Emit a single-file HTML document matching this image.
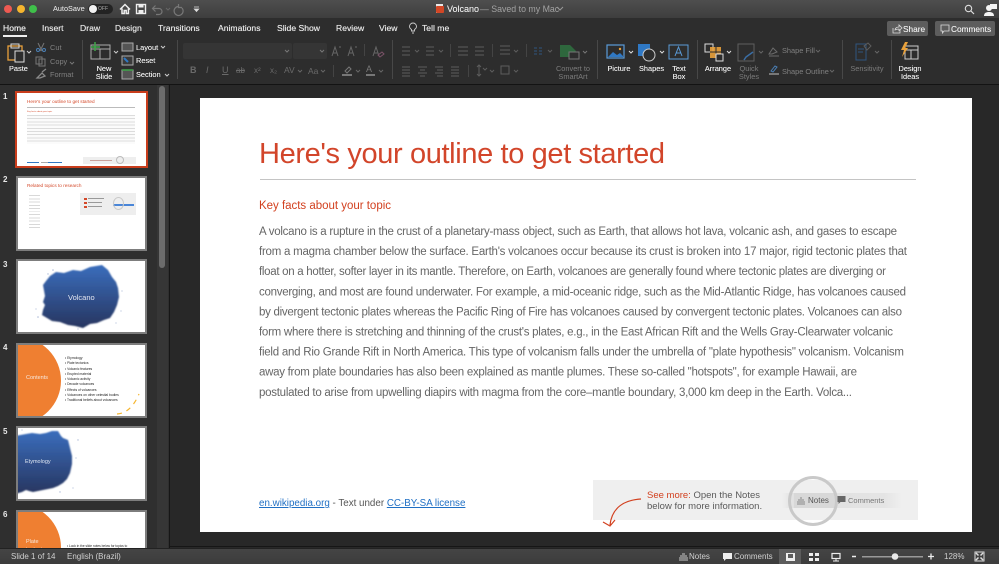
<!DOCTYPE html>
<html><head><meta charset="utf-8"><style>
html,body{margin:0;padding:0;width:999px;height:564px;overflow:hidden;background:#282828;font-family:"Liberation Sans",sans-serif}
#root{position:relative;width:999px;height:564px;overflow:hidden}
.a{position:absolute}
.t{position:absolute;white-space:nowrap;line-height:1}
.tab{top:24px;font-size:8.6px;color:#e8e8e8;text-shadow:0 0 .4px #e8e8e8}
.w{color:#ececec;font-size:7.4px;text-align:center;line-height:8px;white-space:nowrap;position:absolute;text-shadow:0 0 .3px #ececec}
.g{color:#7c7c7c;font-size:7.4px;text-align:center;line-height:8px;white-space:nowrap;position:absolute}
.num{font-size:8px;font-weight:bold;color:#e8e8e8;left:3px;position:absolute;line-height:1}
.th{position:absolute;left:16px;width:131px;height:75px;box-sizing:border-box;background:#fff;border:2px solid #7d7d7d;overflow:hidden}
.sv{position:absolute;overflow:visible}
</style></head><body><div id="root">
<!-- title bar -->
<div class="a" style="left:0;top:0;width:999px;height:18px;background:linear-gradient(#4e4e4e,#3e3e3e)"></div>
<div class="a" style="left:238px;top:18px;width:761px;height:1px;background:#111"></div>
<div class="a" style="left:4px;top:5px;width:8px;height:8px;border-radius:50%;background:#ee5a52"></div>
<div class="a" style="left:17px;top:5px;width:8px;height:8px;border-radius:50%;background:#f5b52e"></div>
<div class="a" style="left:29px;top:5px;width:8px;height:8px;border-radius:50%;background:#3fc04a"></div>
<div class="t" style="left:53px;top:5px;font-size:7.300px;color:#d8d8d8;text-shadow:0 0 .3px #d8d8d8">AutoSave</div>
<div class="a" style="left:88px;top:4px;width:25px;height:10px;border-radius:5px;background:#232323"></div>
<div class="a" style="left:89px;top:5px;width:8px;height:8px;border-radius:50%;background:#f2f2f2"></div>
<div class="t" style="left:98px;top:7px;font-size:5px;color:#aaa">OFF</div>
<svg class="sv" style="left:0;top:0" width="220" height="18" viewBox="0 0 220 18">
<path d="M120 9.500l5-5 5 5M122 8.500v5h2.200v-3h2v3h2.200v-5" fill="none" stroke="#eee" stroke-width="1.500"/>
<rect x="136.500" y="4.500" width="9" height="9" fill="none" stroke="#eee" stroke-width="1.400"/><rect x="138.500" y="4.500" width="5" height="3" fill="#eee"/><rect x="138.500" y="10" width="5" height="3.500" fill="#eee"/>
<path d="M153 8.500h6a3 3 0 0 1 0 6h-3M155.500 5.500l-3 3 3 3" fill="none" stroke="#777" stroke-width="1.200"/>
<path d="M166 8l2 2 2-2" fill="none" stroke="#666" stroke-width="1"/>
<path d="M178 6.500a4.500 4.500 0 1 0 4 1.500M178.500 4v3.500h3.500" fill="none" stroke="#777" stroke-width="1.200"/>
<path d="M194 7h5M194.300 9h4.400l-2.200 2.500z" fill="#ddd" stroke="#ddd" stroke-width=".8"/>
</svg>
<div class="a" style="left:436px;top:4px;width:7px;height:9px;background:#e8e8e8"></div>
<div class="a" style="left:436px;top:6px;width:8px;height:7px;background:#d24726;border-radius:1px"></div>
<div class="t" style="left:447px;top:4.500px;font-size:9px;color:#e6e6e6;text-shadow:0 0 .3px #e6e6e6">Volcano</div>
<div class="t" style="left:480px;top:4.500px;font-size:8.800px;color:#a2a2a2">— Saved to my Mac</div>
<svg class="sv" style="left:556px;top:6px" width="8" height="6"><path d="M1 1l3 3 3-3" fill="none" stroke="#999"/></svg>
<svg class="sv" style="left:960px;top:2px" width="39" height="16" viewBox="0 0 39 16"><circle cx="8.500" cy="6.500" r="3.200" fill="none" stroke="#ddd" stroke-width="1.100"/><path d="M11 9l3 3" stroke="#ddd" stroke-width="1.200"/><circle cx="29" cy="6" r="3" fill="#f4f4f4"/><path d="M24 14c0-3 2-4 5-4s5 1 5 4z" fill="#f4f4f4"/><rect x="30" y="2" width="7" height="5" fill="#f4f4f4"/></svg>
<!-- ribbon -->
<div class="a" style="left:0;top:18px;width:999px;height:66px;background:#2d2d2d"></div>
<div class="a" style="left:0;top:84px;width:999px;height:1px;background:#131313"></div>
<div class="t tab" style="left:3px;color:#f4f4f4">Home</div>
<div class="a" style="left:3px;top:35px;width:24px;height:1.500px;background:#eee"></div>
<div class="t tab" style="left:42px">Insert</div>
<div class="t tab" style="left:80px">Draw</div>
<div class="t tab" style="left:115px">Design</div>
<div class="t tab" style="left:158px">Transitions</div>
<div class="t tab" style="left:218px">Animations</div>
<div class="t tab" style="left:277px">Slide Show</div>
<div class="t tab" style="left:336px">Review</div>
<div class="t tab" style="left:379px">View</div>
<div class="t tab" style="left:422px">Tell me</div>
<svg class="sv" style="left:408px;top:22px" width="10" height="13"><path d="M3.500 9V7.500C2 6.500 1.500 5.500 1.500 4.500a3.500 3.500 0 0 1 7 0c0 1-.5 2-2 3V9zM4 11h2" fill="none" stroke="#ccc" stroke-width=".9"/></svg>
<!-- share/comments -->
<div class="a" style="left:887px;top:21px;width:41px;height:15px;background:#5d5d5d;border-radius:2px"></div>
<div class="t" style="left:903px;top:24.500px;font-size:8.300px;color:#eee;text-shadow:0 0 .3px #eee">Share</div>
<svg class="sv" style="left:892px;top:24px" width="10" height="10"><path d="M1 4v5h7V6M3 6c0-2 2-3 4-3V1l3 3-3 2.500V5c-2 0-3 .5-4 1z" fill="none" stroke="#ddd" stroke-width=".8"/></svg>
<div class="a" style="left:935px;top:21px;width:60px;height:15px;background:#5d5d5d;border-radius:2px"></div>
<div class="t" style="left:951px;top:24.500px;font-size:8.300px;color:#eee;text-shadow:0 0 .3px #eee">Comments</div>
<svg class="sv" style="left:940px;top:24px" width="10" height="10"><path d="M1 1h8v6H4L2.500 9V7H1z" fill="none" stroke="#ddd" stroke-width=".8"/></svg>
<!-- ribbon separators -->
<div class="a" style="left:82px;top:40px;width:1px;height:39px;background:#484848"></div>
<div class="a" style="left:177px;top:40px;width:1px;height:39px;background:#484848"></div>
<div class="a" style="left:392px;top:40px;width:1px;height:39px;background:#484848"></div>
<div class="a" style="left:597px;top:40px;width:1px;height:39px;background:#484848"></div>
<div class="a" style="left:697px;top:40px;width:1px;height:39px;background:#484848"></div>
<div class="a" style="left:842px;top:40px;width:1px;height:39px;background:#484848"></div>
<div class="a" style="left:891px;top:40px;width:1px;height:39px;background:#484848"></div>
<!-- font combo -->
<div class="a" style="left:183px;top:43px;width:109px;height:16px;background:#353535;border-radius:2px"></div>
<div class="a" style="left:293px;top:43px;width:34px;height:16px;background:#353535;border-radius:2px"></div>
<svg class="sv" style="left:0;top:36px" width="999" height="48" viewBox="0 36 999 48" fill="none">
<!-- paste -->
<rect x="8" y="46" width="14" height="14" stroke="#e9a13b" stroke-width="1.300"/><rect x="11" y="44" width="8" height="4" stroke="#ddd"/><rect x="15" y="51" width="9" height="11" fill="#2d2d2d" stroke="#ddd"/>
<path d="M27 51l2 2 2-2" stroke="#ccc"/>
<path d="M38 43l4 8M44 43l-4 8" stroke="#777"/><circle cx="38" cy="50" r="1.500" stroke="#4a7fb5"/><circle cx="44" cy="50" r="1.500" stroke="#4a7fb5"/>
<rect x="36" y="57" width="6" height="7" stroke="#777"/><rect x="39" y="59" width="6" height="7" stroke="#777"/>
<path d="M37 78l5-5 3 3-5 2zM42 72l4-3" stroke="#8a8a8a" stroke-width="1.300"/>
<path d="M70 62l2 2 2-2" stroke="#777"/>
<!-- new slide -->
<rect x="91" y="45" width="19" height="14" stroke="#aaa"/><path d="M91 49h19M100 49v10" stroke="#aaa"/><path d="M95 42v9M91 47h9" stroke="#3fa64a" stroke-width="1.500"/>
<path d="M114 51l2 2 2-2" stroke="#ccc"/>
<rect x="122" y="43" width="11" height="8" stroke="#aaa" fill="#555"/>
<rect x="122" y="56" width="11" height="9" stroke="#aaa" fill="#3a3a3a"/><path d="M124 58l4 4" stroke="#2f78c4" stroke-width="2"/>
<rect x="122" y="70" width="11" height="9" stroke="#aaa" fill="#555"/><path d="M122 70h11" stroke="#3fa64a" stroke-width="1.500"/>
<path d="M161 46l2 2 2-2M165 74l2 2 2-2" stroke="#ccc"/>
<!-- font -->
<path d="M285 50l2 2 2-2M320 50l2 2 2-2" stroke="#777"/>
<path d="M332 56l3-9 3 9M333 53h4M339 47h2" stroke="#666"/><path d="M348 56l3-9 3 9M349 53h4M355 47h2" stroke="#666"/>
<path d="M364.500 44v12" stroke="#444"/><path d="M373 56l3-9 3 9M374 53h4" stroke="#666"/><path d="M378 55l4-3 2 2-4 3z" stroke="#7a5268"/>
<!-- lower font row -->
<path d="M298 70l2 2 2-2M321 70l2 2 2-2M356 70l2 2 2-2M379 70l2 2 2-2" stroke="#666"/>
<path d="M333.500 65v12" stroke="#444"/>
<path d="M342 75h10" stroke="#777" stroke-width="2"/><path d="M345 71l4-4 2 2-4 4z" stroke="#777"/>
<path d="M366 75h9" stroke="#777" stroke-width="2"/>
<!-- bullets -->
<path d="M402 47h8M402 51h8M402 55h8M415 50l2 2 2-2M426 47h8M426 51h8M426 55h8M439 50l2 2 2-2M458 47h10M458 51h10M458 55h10M475 47h9M475 51h9M475 55h9" stroke="#5d5d5d"/>
<path d="M450.500 44v13M492.500 44v13" stroke="#444"/>
<path d="M402 67h8M402 70h8M402 73h8M402 76h8M418 67h9M420 70h5M418 73h9M420 76h5M435 67h8M437 70h6M435 73h8M437 76h6M451 67h8M451 70h8M451 73h8M451 76h8" stroke="#5d5d5d"/>
<path d="M468.500 65v12" stroke="#444"/>
<path d="M479 65v11M477 67l2-2 2 2M477 74l2 2 2-2M483 68l2 2 2-2M490 70l2 2 2-2" stroke="#5d5d5d"/>
<path d="M500 46h10M500 50h10M500 54h10M514 50l2 2 2-2M501 66h8v8h-8zM514 70l2 2 2-2" stroke="#5d5d5d"/>
<path d="M526.500 44v13" stroke="#444"/>
<path d="M534 48h3M534 51h3M534 54h3M539 48h3M539 51h3M539 54h3" stroke="#30557f"/>
<path d="M548 50l2 2 2-2" stroke="#5d5d5d"/>
<path d="M560 45h10l6 6-6 6h-10z" fill="#2f6e3f" opacity=".9"/><rect x="569" y="52" width="10" height="7" fill="#2d2d2d" stroke="#777"/>
<path d="M583 51l2 2 2-2" stroke="#777"/>
<!-- picture etc -->
<rect x="607" y="45" width="17" height="13" stroke="#5a9bd8" stroke-width="1.200"/><path d="M608 57l5-5 4 3 3-2 3 3v1z" fill="#2f78c4"/><circle cx="620" cy="49" r="1.200" fill="#e9a13b"/>
<path d="M629 51l2 2 2-2" stroke="#ddd"/>
<rect x="638" y="44" width="12" height="12" fill="#2f78c4"/><circle cx="649" cy="55" r="6" fill="#2d2d2d" stroke="#ccc"/>
<path d="M660 51l2 2 2-2" stroke="#ddd"/>
<rect x="669" y="45" width="19" height="14" stroke="#5a9bd8"/><path d="M675 56l3.500-9 3.500 9M676 53h5" stroke="#5a9bd8"/>
<!-- arrange -->
<rect x="705" y="44" width="8" height="8" stroke="#ddd"/><rect x="710" y="47" width="11" height="11" fill="#e9a13b" opacity=".9"/><path d="M716 47v11M710 52h11" stroke="#2d2d2d"/><rect x="716" y="54" width="7" height="7" fill="#2d2d2d" stroke="#ddd"/>
<path d="M727 51l2 2 2-2" stroke="#ddd"/>
<rect x="738" y="44" width="16" height="17" stroke="#5e5e5e"/><path d="M744 60l2-3 7-5" stroke="#3a6ea5" stroke-width="1.500"/>
<path d="M759 51l2 2 2-2" stroke="#666"/>
<path d="M769 54l4-6 4 4-5 2zM769 56h10" stroke="#6c6c6c"/>
<path d="M769 74h10" stroke="#777" stroke-width="2"/><path d="M771 71l4-5 2 1-4 5z" stroke="#4a7fb5"/>
<path d="M816 50l2 2 2-2M830 70l2 2 2-2" stroke="#666"/>
<!-- sensitivity -->
<path d="M856 44h10v16h-10z" stroke="#30557f"/><path d="M858 49l6 0M858 52l5 0" stroke="#30557f"/><path d="M864 46l4-3 3 3-4 4z" stroke="#5d5d5d"/>
<path d="M875 51l2 2 2-2" stroke="#666"/>
<!-- design ideas -->
<rect x="905" y="46" width="13" height="13" stroke="#ccc"/><path d="M905 50h13M911 50v9" stroke="#ccc"/><path d="M905 42l-4 8h3l-2 7 6-9h-3l3-6z" fill="#e9a13b"/>
</svg>
<div class="t" style="left:9px;top:65px;font-size:7.400px;color:#ececec;text-shadow:0 0 .3px #ececec">Paste</div>
<div class="t" style="left:50px;top:44px;font-size:7.400px;color:#808080">Cut</div>
<div class="t" style="left:50px;top:58px;font-size:7.400px;color:#808080">Copy</div>
<div class="t" style="left:50px;top:71px;font-size:7.400px;color:#808080">Format</div>
<div class="w" style="left:93px;top:65px;width:22px">New<br>Slide</div>
<div class="t" style="left:136px;top:44px;font-size:7.400px;color:#ececec;text-shadow:0 0 .3px #ececec">Layout</div>
<div class="t" style="left:136px;top:57px;font-size:7.400px;color:#ececec;text-shadow:0 0 .3px #ececec">Reset</div>
<div class="t" style="left:136px;top:71px;font-size:7.400px;color:#ececec;text-shadow:0 0 .3px #ececec">Section</div>
<div class="t" style="left:190px;top:66px;font-size:9px;color:#6a6a6a;font-weight:bold">B</div>
<div class="t" style="left:206px;top:66px;font-size:9px;color:#6a6a6a;font-style:italic">I</div>
<div class="t" style="left:222px;top:66px;font-size:9px;color:#6a6a6a;text-decoration:underline">U</div>
<div class="t" style="left:236px;top:67px;font-size:8px;color:#6a6a6a;text-decoration:line-through">ab</div>
<div class="t" style="left:254px;top:67px;font-size:8px;color:#6a6a6a">x²</div>
<div class="t" style="left:270px;top:67px;font-size:8px;color:#6a6a6a">x₂</div>
<div class="t" style="left:284px;top:66px;font-size:8.500px;color:#6a6a6a">AV</div>
<div class="t" style="left:308px;top:67px;font-size:8.500px;color:#6a6a6a">Aa</div>
<div class="t" style="left:366px;top:65px;font-size:9px;color:#777">A</div>
<div class="g" style="left:555px;top:65px;width:36px">Convert to<br>SmartArt</div>
<div class="w" style="left:607px;top:65px;width:24px">Picture</div>
<div class="w" style="left:639px;top:65px;width:24px">Shapes</div>
<div class="w" style="left:668px;top:65px;width:22px">Text<br>Box</div>
<div class="w" style="left:704px;top:65px;width:28px">Arrange</div>
<div class="g" style="left:737px;top:65px;width:24px">Quick<br>Styles</div>
<div class="t" style="left:782px;top:47px;font-size:7.400px;color:#808080">Shape Fill</div>
<div class="t" style="left:782px;top:68px;font-size:7.400px;color:#808080">Shape Outline</div>
<div class="g" style="left:849px;top:65px;width:36px">Sensitivity</div>
<div class="w" style="left:898px;top:65px;width:24px">Design<br>Ideas</div>
<!-- panels -->
<div class="a" style="left:0;top:85px;width:169px;height:463px;background:#2f2f2f"></div>
<div class="a" style="left:169px;top:85px;width:1px;height:463px;background:#161616"></div>
<div class="a" style="left:170px;top:85px;width:829px;height:463px;background:#282828"></div>
<div class="a" style="left:157px;top:85px;width:11px;height:463px;background:#363636"></div>
<div class="a" style="left:159px;top:86px;width:6px;height:182px;background:#6c6c6c;border-radius:3px"></div>
<div class="a" style="left:170px;top:546px;width:829px;height:1px;background:#161616"></div>
<!-- thumbnails -->
<div class="num" style="top:93px">1</div>
<div class="a" style="left:15px;top:91px;width:133px;height:77px;box-sizing:border-box;border:2px solid #c93d1c;background:#fff;overflow:hidden">
 <div class="t" style="left:10px;top:6.500px;font-size:4.700px;color:#d4492a">Here's your outline to get started</div>
 <div class="a" style="left:10px;top:14px;width:108px;height:1px;background:#bbb"></div>
 <div class="t" style="left:10px;top:17.500px;font-size:2.200px;color:#d4492a">Key facts about your topic</div>
 <div class="a" style="left:10px;top:22px;width:108px;height:29px;background:repeating-linear-gradient(#dcdcdc 0 1px,#fbfbfb 1px 3.200px)"></div>
 <div class="a" style="left:10px;top:69px;width:12px;height:1px;background:#2f78c4"></div><div class="a" style="left:31px;top:69px;width:14px;height:1px;background:#2f78c4"></div><div class="a" style="left:24px;top:69px;width:7px;height:1px;background:#aaa"></div>
 <div class="a" style="left:66px;top:64px;width:53px;height:7px;background:#eee"></div>
 <div class="a" style="left:99px;top:63px;width:8px;height:8px;border:1px solid #bbb;border-radius:50%;box-sizing:border-box"></div>
 <div class="a" style="left:73px;top:67px;width:22px;height:1px;background:#c8a09a"></div>
</div>
<div class="num" style="top:176px">2</div>
<div class="th" style="top:176px">
 <div class="t" style="left:9px;top:6px;font-size:4.700px;color:#d4492a">Related topics to research</div>
 <div class="a" style="left:11px;top:17px;width:11px;height:17px;background:repeating-linear-gradient(#d8d8d8 0 1px,#fff 1px 3.300px)"></div>
 <div class="a" style="left:11px;top:36px;width:11px;height:14px;background:repeating-linear-gradient(#d8d8d8 0 1px,#fff 1px 3.300px)"></div>
 <div class="a" style="left:62px;top:15px;width:56px;height:22px;background:#eeeeee"></div>
 <div class="a" style="left:66px;top:20px;width:3px;height:2px;background:#d4492a"></div><div class="a" style="left:66px;top:24px;width:3px;height:2px;background:#d4492a"></div><div class="a" style="left:66px;top:28px;width:3px;height:2px;background:#d4492a"></div>
 <div class="a" style="left:70px;top:20px;width:16px;height:1px;background:#999"></div><div class="a" style="left:70px;top:24px;width:14px;height:1px;background:#999"></div><div class="a" style="left:70px;top:28px;width:14px;height:1px;background:#999"></div>
 <div class="a" style="left:95px;top:26px;width:21px;height:2px;background:#4a86d8"></div>
 <div class="a" style="left:95px;top:19px;width:11px;height:13px;border:1px solid #c9c9c9;border-radius:50%;box-sizing:border-box"></div>
</div>
<div class="num" style="top:261px">3</div>
<div class="th" style="top:259px"></div>
<svg class="sv" style="left:18px;top:261px" width="127" height="71" viewBox="0 0 127 71"><defs><linearGradient id="bl" x1="0" y1="0" x2="0" y2="1"><stop offset="0" stop-color="#3a6dbc"/><stop offset="1" stop-color="#27355f"/></linearGradient><filter id="sf"><feGaussianBlur stdDeviation=".9"/></filter></defs>
<path d="M32 15L38 11 46 12 55 9 63 10 72 6 84 4 90 9 94 16 98 21 100 27 101 36 99 44 96 51 92 57 86 59 79 62 72 63 65 67 57 65 50 64 42 61 34 60 24 54 25 49 27 44 25 41 27 35 25 24 28 20z" fill="url(#bl)" filter="url(#sf)"/>
<g fill="#aebbd8"><circle cx="35" cy="9" r=".8"/><circle cx="30" cy="13" r=".7"/><circle cx="104" cy="30" r=".6"/><circle cx="103" cy="50" r=".6"/><circle cx="18" cy="48" r=".6"/><circle cx="20" cy="56" r=".8"/><circle cx="98" cy="62" r=".6"/><circle cx="60" cy="68" r=".6"/></g></svg>
<div class="t" style="left:68px;top:294px;font-size:7.500px;color:#e3e8f2">Volcano</div>
<div class="num" style="top:344px">4</div>
<div class="th" style="top:343px">
 <div class="a" style="left:-44px;top:-8px;width:87px;height:87px;border-radius:50%;background:#ef7f31"></div>
 <div class="t" style="left:8px;top:31px;font-size:5.500px;color:#f8e9df">Contents</div>
 <div class="a" style="left:47px;top:11px;font-size:3.300px;line-height:5.300px;color:#222;white-space:nowrap">• Etymology<br>• Plate tectonics<br>• Volcanic features<br>• Erupted material<br>• Volcanic activity<br>• Decade volcanoes<br>• Effects of volcanoes<br>• Volcanoes on other celestial bodies<br>• Traditional beliefs about volcanoes</div>
 <svg class="sv" style="left:98px;top:46px" width="30" height="26"><path d="M1 23q14-1 22-20" fill="none" stroke="#f5b52e" stroke-width="1.200" stroke-dasharray="5 5"/></svg>
</div>
<div class="num" style="top:428px">5</div>
<div class="th" style="top:426px">
 <svg class="sv" style="left:0;top:0" width="127" height="71" viewBox="0 0 127 71"><defs><linearGradient id="b2" x1="0" y1="0" x2="0" y2="1"><stop offset="0" stop-color="#3a6dbc"/><stop offset="1" stop-color="#27355f"/></linearGradient></defs><path d="M-3 8L8 6 14 5 22 6 28 5 34 3 40 3 43 8 45 10 50 12 52 20 54 28 54 36 52 45 49 51 45 55 40 58 35 60 30 61 25 62 20 63 15 64 11 63 8 62 4 64 -3 66z" fill="url(#b2)" filter="url(#sf)"/><g fill="#aebbd8"><circle cx="60" cy="12" r=".7"/><circle cx="58" cy="30" r=".6"/><circle cx="55" cy="60" r=".6"/><circle cx="4" cy="2" r=".6"/><circle cx="42" cy="64" r=".7"/></g></svg>
 <div class="t" style="left:7px;top:32px;font-size:5.500px;color:#dfe6f2">Etymology</div>
</div>
<div class="num" style="top:511px">6</div>
<div class="a" style="left:16px;top:510px;width:131px;height:38px;box-sizing:border-box;border:2px solid #7d7d7d;border-bottom:0;background:#fff;overflow:hidden">
 <div class="a" style="left:-44px;top:-8px;width:87px;height:87px;border-radius:50%;background:#ef7f31"></div>
 <div class="a" style="left:8px;top:26px;font-size:5.500px;line-height:8px;color:#f8e9df">Plate<br>tectonics</div>
 <div class="a" style="left:49px;top:32px;font-size:3.200px;line-height:5px;color:#222;white-space:nowrap">• Look in the slide notes below for topics to<br>&nbsp; consider talking about</div>
</div>
<!-- slide -->
<div class="a" style="left:200px;top:98px;width:772px;height:434px;background:#fff"></div>
<svg class="sv" style="left:0;top:0" width="999" height="564" viewBox="0 0 999 564" font-family="Liberation Sans, sans-serif">
<text x="259" y="163" font-size="29" fill="#d2452a" textLength="406" lengthAdjust="spacing">Here's your outline to get started</text>
<text x="259" y="209" font-size="11.500" fill="#d2401f" textLength="132" lengthAdjust="spacing">Key facts about your topic</text>
<g font-size="11.500" fill="#666" lengthAdjust="spacing">
<text x="259" y="235" textLength="638">A volcano is a rupture in the crust of a planetary-mass object, such as Earth, that allows hot lava, volcanic ash, and gases to escape</text>
<text x="259" y="255.100" textLength="648">from a magma chamber below the surface. Earth's volcanoes occur because its crust is broken into 17 major, rigid tectonic plates that</text>
<text x="259" y="275.200" textLength="627">float on a hotter, softer layer in its mantle. Therefore, on Earth, volcanoes are generally found where tectonic plates are diverging or</text>
<text x="259" y="295.300" textLength="647">converging, and most are found underwater. For example, a mid-oceanic ridge, such as the Mid-Atlantic Ridge, has volcanoes caused</text>
<text x="259" y="315.400" textLength="643">by divergent tectonic plates whereas the Pacific Ring of Fire has volcanoes caused by convergent tectonic plates. Volcanoes can also</text>
<text x="259" y="335.500" textLength="634">form where there is stretching and thinning of the crust's plates, e.g., in the East African Rift and the Wells Gray-Clearwater volcanic</text>
<text x="259" y="355.600" textLength="645">field and Rio Grande Rift in North America. This type of volcanism falls under the umbrella of "plate hypothesis" volcanism. Volcanism</text>
<text x="259" y="375.700" textLength="598">away from plate boundaries has also been explained as mantle plumes. These so-called "hotspots", for example Hawaii, are</text>
<text x="259" y="395.800" textLength="593">postulated to arise from upwelling diapirs with magma from the core–mantle boundary, 3,000 km deep in the Earth. Volca...</text>
</g>
</svg>
<div class="a" style="left:260px;top:179px;width:656px;height:1px;background:#c4c4c4"></div>
<div class="t" style="left:259px;top:499px;font-size:9.800px;color:#555"><span style="color:#1f6fc4;text-decoration:underline">en.wikipedia.org</span> - Text under <span style="color:#1f6fc4;text-decoration:underline">CC-BY-SA license</span></div>
<!-- see more -->
<div class="a" style="left:593px;top:480px;width:325px;height:40px;background:#efefef"></div>
<div class="t" style="left:647px;top:490.500px;font-size:9.500px;color:#5a5a5a"><span style="color:#d2401f">See more:</span> Open the Notes</div>
<div class="t" style="left:647px;top:501.500px;font-size:9.500px;color:#5a5a5a">below for more information.</div>
<svg class="sv" style="left:600px;top:495px" width="50" height="35"><path d="M41 4C25 5 12 12 10 30M3 27l7 4 5-6" fill="none" stroke="#d2401f" stroke-width="1.200"/></svg>
<div class="a" style="left:782px;top:493px;width:120px;height:15px;background:linear-gradient(90deg,#efefef,#e0e0e0 10%,#e4e4e4 85%,#efefef)"></div>
<div class="a" style="left:794px;top:493px;width:42px;height:15px;background:#d8d8d8"></div>
<div class="a" style="left:788px;top:476px;width:50px;height:50px;border:3px solid #c9c9c9;border-radius:50%;box-sizing:border-box"></div>
<div class="t" style="left:808px;top:497px;font-size:8px;color:#555">Notes</div>
<div class="t" style="left:848px;top:497px;font-size:7.500px;color:#777">Comments</div>
<svg class="sv" style="left:795px;top:495px" width="50" height="11"><path d="M2 9h8M2 7h8M3 5h6M5 3h2" stroke="#888"/><path d="M43 1h8v6h-5l-2 2V7h-1z" transform="translate(-.5,0)" fill="#666"/></svg>
<!-- status bar -->
<div class="a" style="left:0;top:548px;width:999px;height:16px;background:linear-gradient(#454545,#3c3c3c)"></div>
<div class="a" style="left:0;top:548px;width:999px;height:1px;background:#222"></div>
<div class="t" style="left:11px;top:552.500px;font-size:8px;color:#d0d0d0">Slide 1 of 14</div>
<div class="t" style="left:67px;top:552.500px;font-size:8px;color:#d0d0d0">English (Brazil)</div>
<div class="t" style="left:689px;top:552.500px;font-size:8px;color:#d0d0d0">Notes</div>
<div class="t" style="left:734px;top:552.500px;font-size:8px;color:#d0d0d0">Comments</div>
<div class="a" style="left:779px;top:549px;width:22px;height:15px;background:#5c5c5c"></div>
<svg class="sv" style="left:675px;top:549px" width="324" height="15" viewBox="675 549 324 15">
<path d="M679 560h9M679 558h9M680 556h7M682 554h3" stroke="#c8c8c8"/>
<path d="M723 553h9v6h-6l-2 2v-2h-1z" fill="#eee"/>
<rect x="786" y="553" width="9" height="8" fill="#eee"/><rect x="788" y="554" width="5" height="4" fill="#5c5c5c"/>
<rect x="809" y="553" width="4" height="3" fill="#eee"/><rect x="815" y="553" width="4" height="3" fill="#eee"/><rect x="809" y="558" width="4" height="3" fill="#eee"/><rect x="815" y="558" width="4" height="3" fill="#eee"/>
<rect x="832" y="553.500" width="8" height="5" fill="none" stroke="#eee" stroke-width="1.200"/><path d="M836 559v2M833 561h6" stroke="#eee"/>
<path d="M852 556.500h4" stroke="#eee" stroke-width="1.500"/>
<rect x="862" y="556" width="61" height="1.500" fill="#999"/><circle cx="895" cy="556.500" r="3.300" fill="#e8e8e8"/>
<path d="M928 556.500h6M931 553.500v6" stroke="#eee" stroke-width="1.300"/>
<rect x="975" y="552" width="9" height="9" fill="none" stroke="#ddd"/><path d="M976 553l2.500 2.500M983 553l-2.500 2.500M976 560l2.500-2.500M983 560l-2.500-2.500" stroke="#ddd" stroke-width="1.500"/>
</svg>
<div class="t" style="left:944px;top:552.500px;font-size:8px;color:#d0d0d0">128%</div>
</div></body></html>
